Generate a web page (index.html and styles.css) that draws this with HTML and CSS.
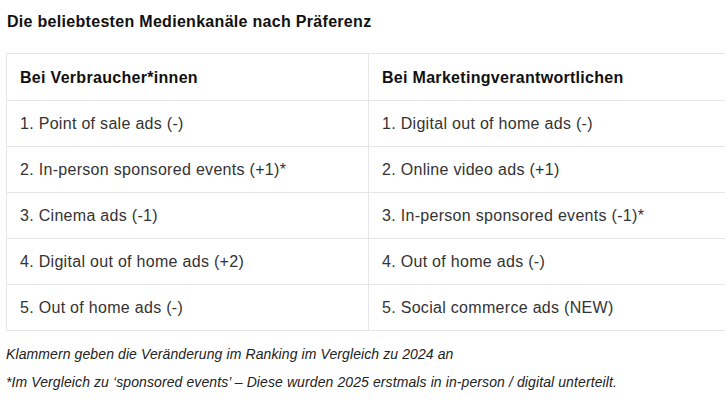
FILE: index.html
```html
<!DOCTYPE html>
<html lang="de">
<head>
<meta charset="utf-8">
<title>Medienkanäle</title>
<link rel="stylesheet" href="styles.css">
</head>
<body>
<h1 class="title">Die beliebtesten Medienkanäle nach Präferenz</h1>
<table class="rank">
  <thead>
    <tr><th>Bei Verbraucher*innen</th><th>Bei Marketingverantwortlichen</th></tr>
  </thead>
  <tbody>
    <tr><td>1. Point of sale ads (-)</td><td>1. Digital out of home ads (-)</td></tr>
    <tr><td>2. In-person sponsored events (+1)*</td><td>2. Online video ads (+1)</td></tr>
    <tr><td>3. Cinema ads (-1)</td><td>3. In-person sponsored events (-1)*</td></tr>
    <tr><td>4. Digital out of home ads (+2)</td><td>4. Out of home ads (-)</td></tr>
    <tr><td>5. Out of home ads (-)</td><td>5. Social commerce ads (NEW)</td></tr>
  </tbody>
</table>
<p class="note">Klammern geben die Veränderung im Ranking im Vergleich zu 2024 an</p>
<p class="note">*Im Vergleich zu ‘sponsored events’ – Diese wurden 2025 erstmals in in-person / digital unterteilt.</p>
</body>
</html>
```
FILE: styles.css
```css
html, body {
  margin: 0;
  padding: 0;
  overflow: hidden;
  background: #fff;
}
body {
  font-family: "Liberation Sans", Arial, sans-serif;
  color: #333;
  padding: 0 0 0 6px;
  width: 760px;
}
.title {
  font-size: 16px;
  font-weight: bold;
  color: #111;
  line-height: 20px;
  letter-spacing: 0.3px;
  margin: 12px 0 0 1px;
}
.rank {
  border-collapse: collapse;
  width: 725px;
  margin-top: 21px;
  table-layout: fixed;
  font-size: 16px;
  letter-spacing: 0.3px;
}
.rank th, .rank td {
  border: 1px solid #e6e6e6;
  text-align: left;
  padding: 14px 13px 13px 13px;
  line-height: 18px;
}
.rank th {
  font-weight: bold;
  color: #111;
  padding-top: 15px;
}
.note {
  font-style: italic;
  font-size: 14px;
  line-height: 16px;
  letter-spacing: 0.1px;
  color: #222;
  margin: 15px 0 0 0;
}
.note + .note {
  margin-top: 12px;
}
```
